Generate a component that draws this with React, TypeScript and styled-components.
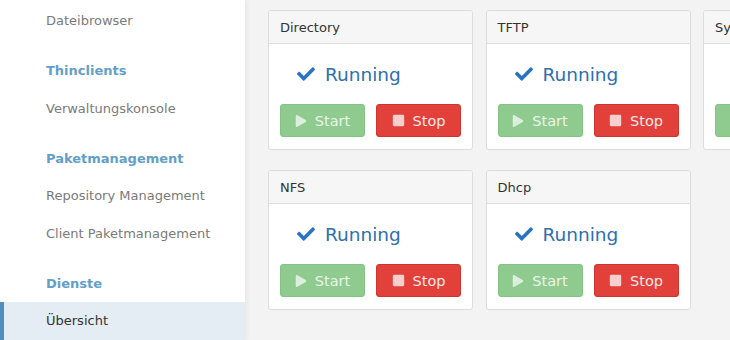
import { FaCheck, FaPlay, FaStop } from "react-icons/fa";
import styled, { createGlobalStyle } from "styled-components";

const services = [
  ["Directory", "TFTP", "Systemd"],
  ["NFS", "Dhcp"],
];

const menu: { label: string; heading?: boolean; active?: boolean }[] = [
  { label: "Dateibrowser" },
  { label: "Thinclients", heading: true },
  { label: "Verwaltungskonsole" },
  { label: "Paketmanagement", heading: true },
  { label: "Repository Management" },
  { label: "Client Paketmanagement" },
  { label: "Dienste", heading: true },
  { label: "Übersicht", active: true },
];

const App = () => {
  return (
    <Page>
      <GlobalStyle />
      <Sidebar>
        {menu.map((m) => (
          <MenuItem key={m.label} $heading={m.heading} $active={m.active}>
            {m.label}
          </MenuItem>
        ))}
      </Sidebar>
      <Main>
        <Grid>
          {services.flat().map((name) => (
            <Card key={name}>
              <CardHeader>{name}</CardHeader>
              <CardBody>
                <Status>
                  <FaCheck />
                  <span>Running</span>
                </Status>
                <Buttons>
                  <Button $kind="start">
                    <FaPlay />
                    Start
                  </Button>
                  <Button $kind="stop">
                    <FaStop />
                    Stop
                  </Button>
                </Buttons>
              </CardBody>
            </Card>
          ))}
        </Grid>
      </Main>
    </Page>
  );
};

export default App;

const GlobalStyle = createGlobalStyle`
  html, body {
    margin: 0;
    padding: 0;
    background: #f3f3f3;
    font-family: "DejaVu Sans", Verdana, sans-serif;
  }
`;

const Page = styled.div`
  display: flex;
  width: 730px;
  height: 340px;
  overflow: hidden;
  background: #f3f3f3;
`;

const Sidebar = styled.div`
  width: 245px;
  flex-shrink: 0;
  background: #fff;
  padding-top: 2px;
  box-shadow: 2px 0 4px rgba(0, 0, 0, 0.05);
  z-index: 1;
`;

const MenuItem = styled.div<{ $heading?: boolean; $active?: boolean }>`
  height: 37.5px;
  display: flex;
  align-items: center;
  box-sizing: border-box;
  margin-top: ${(p) => (p.$heading ? "12.5px" : "0")};
  font-size: 13px;
  font-weight: ${(p) => (p.$heading ? "bold" : "normal")};
  color: ${(p) => (p.$heading ? "#629fc8" : p.$active ? "#333" : "#7a7a7a")};
  background: ${(p) => (p.$active ? "#e4ecf4" : "transparent")};
  border-left: ${(p) => (p.$active ? "4px solid #4f8fc0" : "none")};
  padding-left: ${(p) => (p.$active ? "42px" : "46px")};
`;

const Main = styled.div`
  flex: 1;
  padding: 10px 0 0 23px;
  overflow: hidden;
`;

const Grid = styled.div`
  display: grid;
  grid-template-columns: repeat(3, 205px);
  gap: 20px 12.5px;
`;

const Card = styled.div`
  background: #fff;
  border: 1px solid #dcdcdc;
  border-radius: 3px;
  box-sizing: border-box;
  height: 140px;
`;

const CardHeader = styled.div`
  height: 33px;
  box-sizing: border-box;
  display: flex;
  align-items: center;
  padding-left: 11px;
  background: #f6f6f6;
  border-bottom: 1px solid #dddddd;
  border-radius: 3px 3px 0 0;
  font-size: 13px;
  color: #333;
`;

const CardBody = styled.div`
  padding: 0 11px;
`;

const Status = styled.div`
  height: 60px;
  display: flex;
  align-items: center;
  gap: 10px;
  padding-left: 17px;
  font-size: 18.5px;
  color: #2f6fae;
  svg {
    color: #2b73c2;
    font-size: 18px;
  }
`;

const Buttons = styled.div`
  display: flex;
  gap: 11px;
`;

const Button = styled.div<{ $kind: "start" | "stop" }>`
  width: 86px;
  height: 33px;
  box-sizing: border-box;
  display: flex;
  align-items: center;
  justify-content: center;
  gap: 8px;
  border-radius: 3px;
  font-size: 14.5px;
  color: ${(p) => (p.$kind === "start" ? "#eaf6ea" : "#fbe9e8")};
  background: ${(p) => (p.$kind === "start" ? "#8fca8f" : "#e2403a")};
  border: 1px solid ${(p) => (p.$kind === "start" ? "#86c186" : "#cd3630")};
  svg {
    font-size: ${(p) => (p.$kind === "start" ? "12px" : "13px")};
    opacity: 0.85;
  }
`;
